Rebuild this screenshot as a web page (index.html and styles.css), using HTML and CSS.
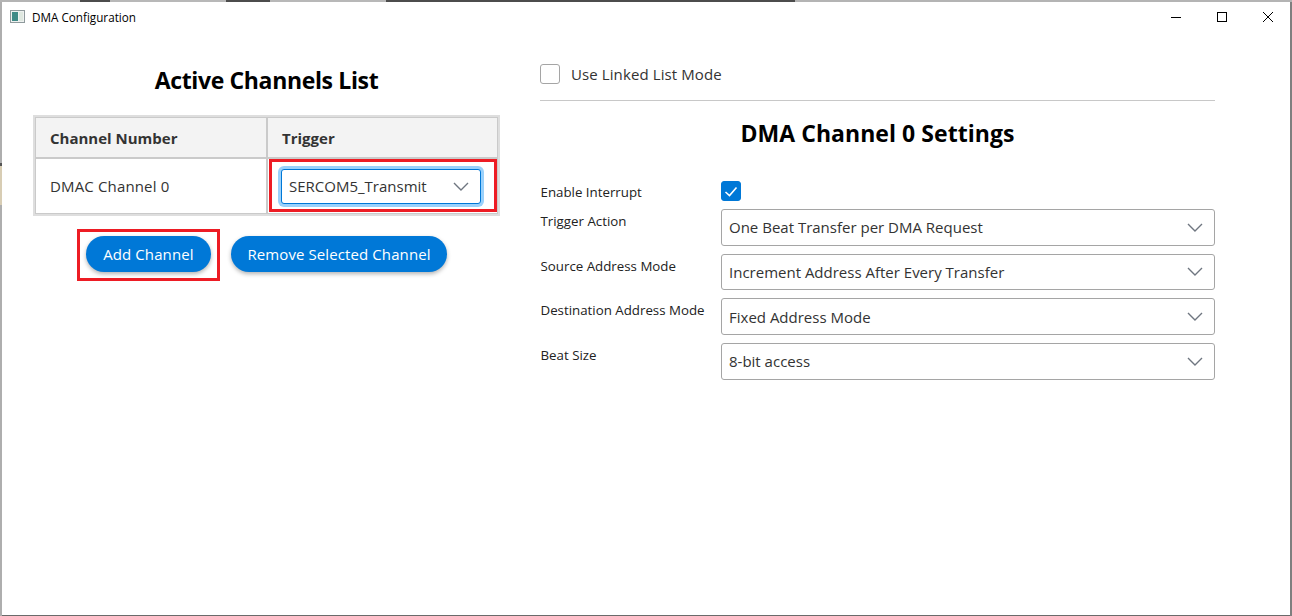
FILE: index.html
```html
<!DOCTYPE html>
<html lang="en">
<head>
<meta charset="utf-8">
<title>DMA Configuration</title>
<link rel="stylesheet" href="styles.css">
</head>
<body>
<div class="window">
  <header class="titlebar">
    <svg class="appicon" width="16" height="14" viewBox="0 0 16 14"><rect x=".5" y=".5" width="14" height="12" fill="#eef1f0" stroke="#8f9a9c"/><rect x="2" y="2" width="6" height="9" fill="#3f8a86"/><rect x="9" y="2" width="4" height="9" fill="#dfe8e0"/></svg>
    <span class="wintitle">DMA Configuration</span>
    <div class="winctrls">
      <svg width="12" height="12" viewBox="0 0 12 12"><path d="M1 6.5h10" stroke="#000" fill="none"/></svg>
      <svg width="12" height="12" viewBox="0 0 12 12"><rect x="1.5" y="1.5" width="9" height="9" stroke="#000" fill="none"/></svg>
      <svg width="12" height="12" viewBox="0 0 12 12"><path d="M1 1l10 10M11 1L1 11" stroke="#000" fill="none"/></svg>
    </div>
  </header>
  <main class="content">
    <section class="left">
      <h2 class="heading left-heading">Active Channels List</h2>
      <div class="table">
        <div class="cell head">Channel Number</div>
        <div class="cell head">Trigger</div>
        <div class="cell body">DMAC Channel 0</div>
        <div class="cell body trigger">
          <div class="select focused"><span>SERCOM5_Transmit</span><svg class="chev" width="16" height="9" viewBox="0 0 16 9"><path d="M1 1l7 7 7-7" stroke="#6f7680" stroke-width="1.4" fill="none"/></svg></div>
          <div class="mark mark-trigger"></div>
        </div>
      </div>
      <div class="buttons">
        <button class="btn add">Add Channel<span class="mark mark-add"></span></button>
        <button class="btn">Remove Selected Channel</button>
      </div>
    </section>
    <section class="right">
      <label class="linked"><span class="check"></span><span>Use Linked List Mode</span></label>
      <hr class="rule">
      <h2 class="heading right-heading">DMA Channel 0 Settings</h2>
      <div class="form">
        <div class="row interrupt">
          <span class="lbl">Enable Interrupt</span>
          <span class="check on"><svg width="16" height="13" viewBox="0 0 16 13"><path d="M2.5 7l4 3.5 7-8" stroke="#fff" stroke-width="1.6" fill="none"/></svg></span>
        </div>
        <div class="row"><span class="lbl">Trigger Action</span><div class="select"><span>One Beat Transfer per DMA Request</span><svg class="chev" width="16" height="9" viewBox="0 0 16 9"><path d="M1 1l7 7 7-7" stroke="#6f7680" stroke-width="1.4" fill="none"/></svg></div></div>
        <div class="row"><span class="lbl">Source Address Mode</span><div class="select"><span>Increment Address After Every Transfer</span><svg class="chev" width="16" height="9" viewBox="0 0 16 9"><path d="M1 1l7 7 7-7" stroke="#6f7680" stroke-width="1.4" fill="none"/></svg></div></div>
        <div class="row"><span class="lbl">Destination Address Mode</span><div class="select"><span>Fixed Address Mode</span><svg class="chev" width="16" height="9" viewBox="0 0 16 9"><path d="M1 1l7 7 7-7" stroke="#6f7680" stroke-width="1.4" fill="none"/></svg></div></div>
        <div class="row"><span class="lbl">Beat Size</span><div class="select"><span>8-bit access</span><svg class="chev" width="16" height="9" viewBox="0 0 16 9"><path d="M1 1l7 7 7-7" stroke="#6f7680" stroke-width="1.4" fill="none"/></svg></div></div>
      </div>
    </section>
  </main>
</div>
</body>
</html>
```
FILE: styles.css
```css
* { box-sizing: border-box; }
html, body { margin: 0; height: 616px; overflow: hidden; }
body { font-family: "Open Sans", "Noto Sans", sans-serif; color: #222; background: #fff; }
.window {
  height: 616px;
  padding: 2px 2px 1px 2px;
  display: flex;
  flex-direction: column;
  background:
    linear-gradient(90deg, #b4b4b4 80px, #4c4c4c 80px 110px, #b8b8b8 110px 226px, #4c4c4c 226px 270px, #b8b8b8 270px 386px, #4c4c4c 386px 795px, #b4b4b4 795px) top / 100% 2px no-repeat,
    linear-gradient(180deg, #aeaeae 163px, #555 163px 166px, #d8cdb4 166px 205px, #aeaeae 205px) left / 2px 100% no-repeat,
    linear-gradient(#7f7f7f, #7f7f7f) right / 2px 100% no-repeat,
    linear-gradient(#6a6a6a, #6a6a6a) bottom / 100% 1px no-repeat,
    #fff;
}
.titlebar { height: 30px; display: flex; align-items: center; padding-left: 8px; flex: none; }
.appicon { margin-right: 6px; }
.wintitle { font-size: 11.7px; color: #000; }
.winctrls { margin-left: auto; display: flex; gap: 34px; padding-right: 16px; }
.content { flex: 1; display: flex; padding-left: 31px; gap: 40px; align-items: flex-start; }
.left { width: 467px; display: flex; flex-direction: column; align-items: center; }
.heading { margin: 0; font-size: 23px; line-height: 30px; font-weight: 700; color: #000; }
.left-heading { margin-top: 33px; margin-bottom: 20px; letter-spacing: -.35px; }
.table { width: 467px; display: grid; grid-template-columns: 230px 1fr; grid-template-rows: 39px 54px; border: 2px solid #dedede; background: #cacaca; gap: 2px; padding: 1px; }
.cell { background: #fff; display: flex; align-items: center; padding-left: 14px; font-size: 15px; color: #333; }
.body { letter-spacing: .15px; }
.head { background: #f3f3f3; font-weight: 700; font-size: 15px; letter-spacing: 0; color: #333; }
.trigger { position: relative; padding-left: 13px; }
.select { flex: 1; height: 36.5px; border: 1px solid #a5a5a5; border-radius: 3px; display: flex; align-items: center; justify-content: space-between; padding: 0 11px 0 7px; font-size: 15px; letter-spacing: 0; color: #333; background: #fff; }
.focused { flex: none; width: 200px; height: 35px; border-color: #0078d7; box-shadow: 0 0 0 3px #9ad1fb; }
.chev { flex: none; }
.mark { position: absolute; border: 3px solid #ed1c24; pointer-events: none; }
.mark-trigger { left: 1px; right: 0; top: 0; bottom: 1px; }
.mark-add { left: -9px; right: -9px; top: -7px; bottom: -9px; }
.buttons { display: flex; gap: 20px; margin-top: 20px; }
.btn { position: relative; height: 36px; border: 0; border-radius: 18px; background: #0078d7; color: #fff; font: 15px "Open Sans", "Noto Sans", sans-serif; letter-spacing: .1px; padding: 0 16.5px; box-shadow: 0 2px 4px rgba(0,0,0,.3); }
.add { width: 125px; }
.right { width: 675px; }
.linked { display: flex; align-items: center; gap: 11px; font-size: 15px; letter-spacing: .1px; margin-top: 32px; color: #333; height: 20px; }
.check { width: 20px; height: 20px; border: 1px solid #a5a5a5; border-radius: 3px; display: flex; align-items: center; justify-content: center; background: #fff; flex: none; }
.check.on { background: #0078d7; border-color: #0078d7; }
.rule { border: 0; border-top: 1px solid #c8c8c8; margin: 16px 0 0; }
.right-heading { text-align: center; margin-top: 17px; letter-spacing: .05px; }
.form { margin-top: 33px; width: 675px; display: flex; flex-direction: column; gap: 8.2px; }
.row { display: flex; align-items: flex-start; }
.lbl { width: 181px; padding-left: .5px; font-size: 13.3px; line-height: 20px; color: #222; flex: none; }
.interrupt { height: 20px; margin-bottom: -.2px; }
.interrupt .lbl { margin-top: 1px; }
.row:not(.interrupt) { height: 36.5px; }
.row:not(.interrupt) .lbl { margin-top: 2px; }
```
